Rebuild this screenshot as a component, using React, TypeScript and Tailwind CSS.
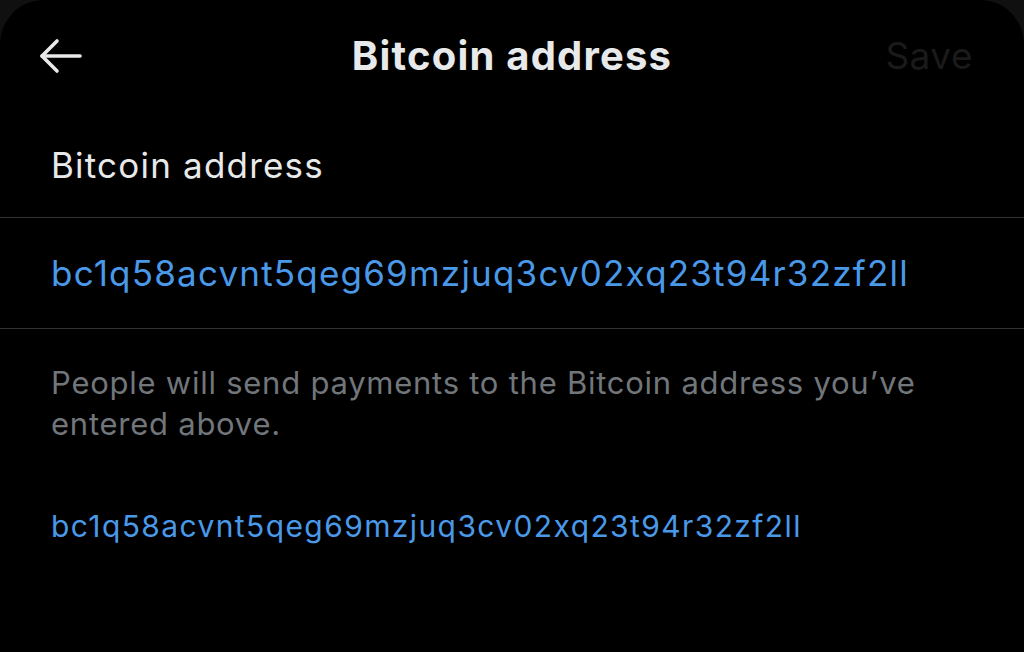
const ADDRESS = 'bc1q58acvnt5qeg69mzjuq3cv02xq23t94r32zf2ll';

function BackArrow() {
  return (
    <svg width="44" height="36" viewBox="0 0 44 36" fill="none" stroke="#e7e9ea" strokeWidth="3.6" strokeLinecap="round" strokeLinejoin="round">
      <path d="M3 18h38" />
      <path d="M18 3L3 18l15 15" />
    </svg>
  );
}

export default function App() {
  return (
    <div className="h-[652px] w-[1024px] overflow-hidden bg-[#101010]" style={{ fontFamily: 'Inter, "Noto Sans", sans-serif' }}>
      <div className="flex h-full flex-col rounded-t-[44px] bg-black">
        {/* ヘッダー */}
        <div className="grid h-[114px] grid-cols-[1fr_auto_1fr] items-center px-[39px] pb-[2px]">
          <BackArrow />
          <h1 className="text-[40px] font-bold tracking-[1.2px] text-[#e7e9ea]">Bitcoin address</h1>
          <span className="mr-[12px] justify-self-end text-[37px] tracking-[0.5px] text-[#1a1a1a]">Save</span>
        </div>

        {/* 入力欄 */}
        <div className="flex h-[104px] items-center border-b border-[#2f3336] px-[51px]">
          <span className="text-[35px] tracking-[1.2px] text-[#e7e9ea]">Bitcoin address</span>
        </div>
        <div className="flex h-[111px] items-center border-b border-[#2f3336] px-[51px]">
          <span className="text-[35px] tracking-[1.2px] text-[#4a99e8]">{ADDRESS}</span>
        </div>

        <p className="px-[51px] pt-[33px] text-[31px] leading-[41px] tracking-[0.75px] text-[#71767b]">
          People will send payments to the Bitcoin address you’ve entered above.
        </p>
        <p className="px-[51px] pt-[60px] text-[30px] tracking-[1.4px] text-[#4a99e8]">{ADDRESS}</p>
      </div>
    </div>
  );
}
